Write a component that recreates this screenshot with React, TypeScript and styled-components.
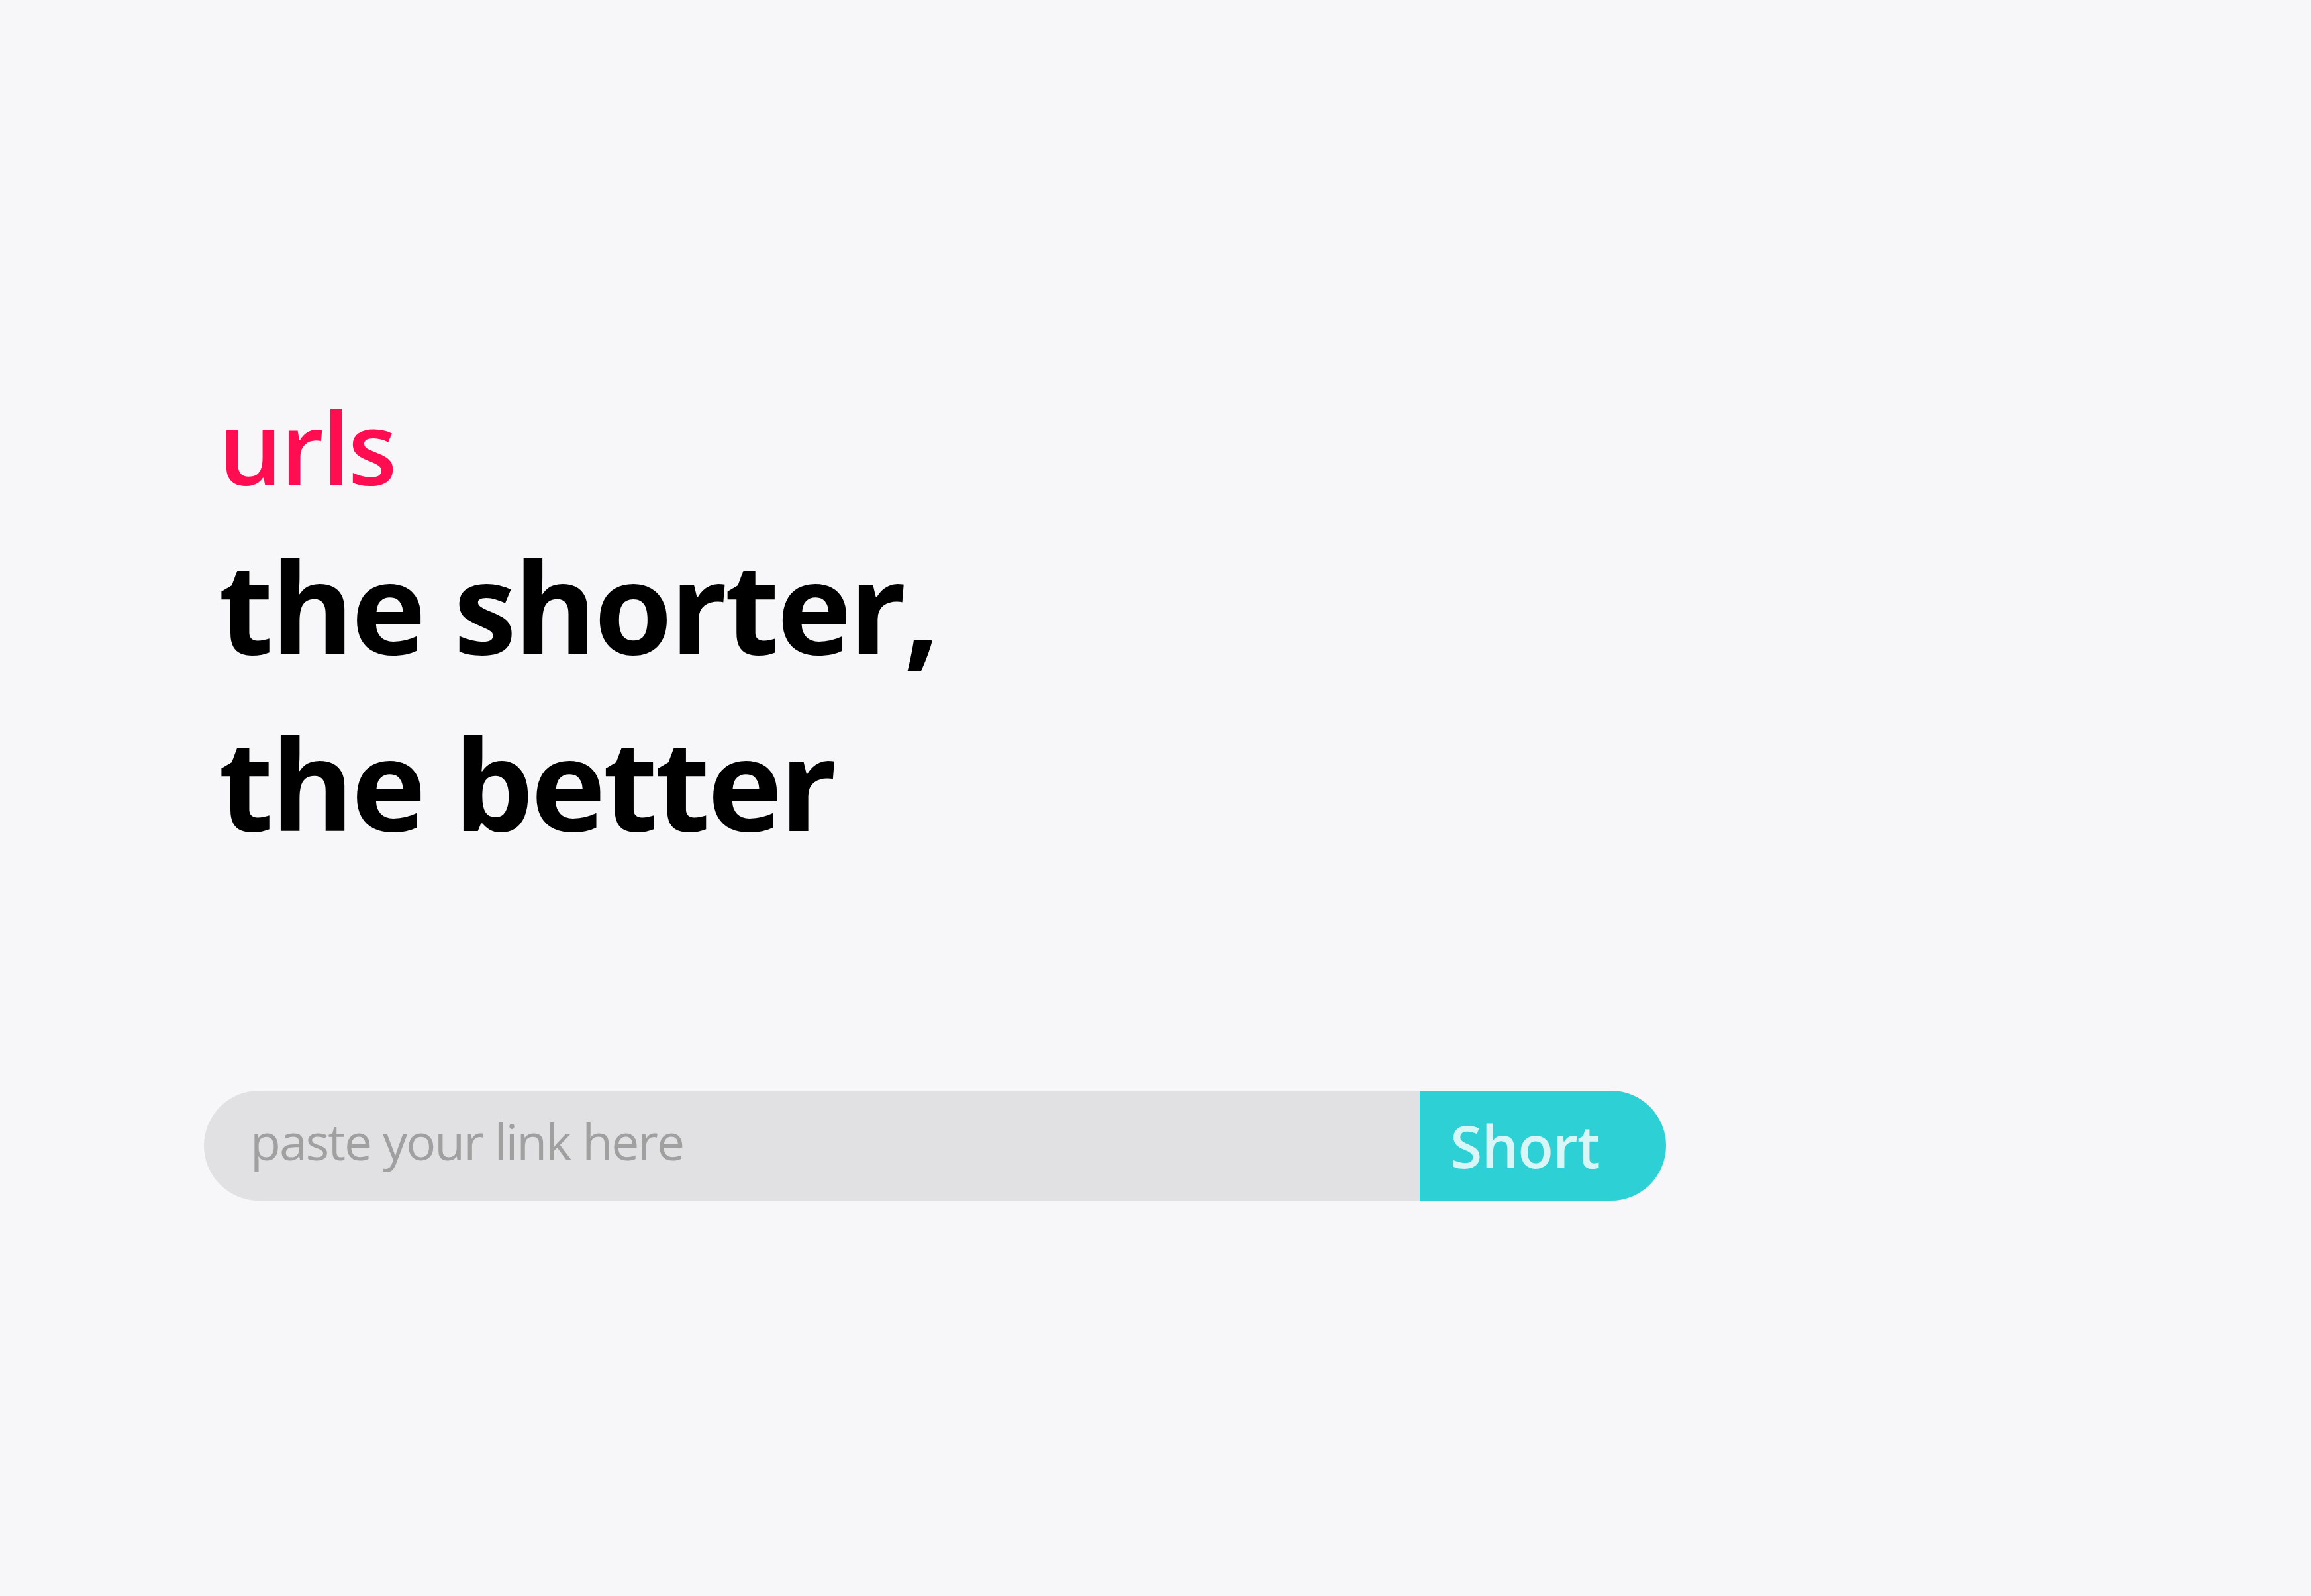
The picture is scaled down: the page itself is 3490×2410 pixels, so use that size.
import React from "react";
import styled, { createGlobalStyle } from "styled-components";

const GlobalStyle = createGlobalStyle`
  html, body {
    margin: 0;
    padding: 0;
    background: #f7f7f9;
  }
  body {
    font-family: "Open Sans", "Noto Sans", "Liberation Sans", sans-serif;
  }
  * { box-sizing: border-box; }
`;

const Page = styled.main`
  min-height: 100vh;
  background: #f7f7f9;
  padding: 598px 0 0 308px;
  display: flex;
  flex-direction: column;
`;

const Hero = styled.header`
  display: flex;
  flex-direction: column;
  padding-left: 22px;
`;

const Brand = styled.div`
  font-size: 152px;
  line-height: 153px;
  font-weight: 600;
  letter-spacing: -3px;
  color: #ff0d50;
`;

const Headline = styled.h1`
  margin: 30px 0 0;
  font-size: 191px;
  line-height: 267px;
  font-weight: 700;
  color: #000;
  letter-spacing: -4px;
`;

const ShortenForm = styled.form`
  display: flex;
  margin-top: 332px;
  width: 2208px;
  height: 166px;
`;

const LinkInput = styled.input`
  flex: 1;
  min-width: 0;
  height: 100%;
  border: none;
  outline: none;
  background: #e1e1e3;
  border-radius: 83px 0 0 83px;
  padding: 0 0 14px 70px;
  font-family: "Open Sans", "Noto Sans", sans-serif;
  font-size: 75px;
  letter-spacing: -2px;
  color: #333;
  &::placeholder {
    color: #a0a0a0;
  }
`;

const ShortButton = styled.button`
  width: 372px;
  height: 100%;
  border: none;
  background: #2dd0d4;
  color: #d9f6f7;
  border-radius: 0 83px 83px 0;
  display: flex;
  align-items: center;
  padding: 0 0 0 46px;
  font-family: "Open Sans", "Noto Sans", sans-serif;
  font-size: 88px;
  font-weight: 600;
  letter-spacing: -1px;
  cursor: pointer;
`;

export default function App() {
  return (
    <>
      <GlobalStyle />
      <Page>
        <Hero>
          <Brand>urls</Brand>
          <Headline>
            the shorter,
            <br />
            the better
          </Headline>
        </Hero>
        <ShortenForm onSubmit={(e) => e.preventDefault()}>
          <LinkInput type="text" placeholder="paste your link here" />
          <ShortButton type="submit">Short</ShortButton>
        </ShortenForm>
      </Page>
    </>
  );
}
